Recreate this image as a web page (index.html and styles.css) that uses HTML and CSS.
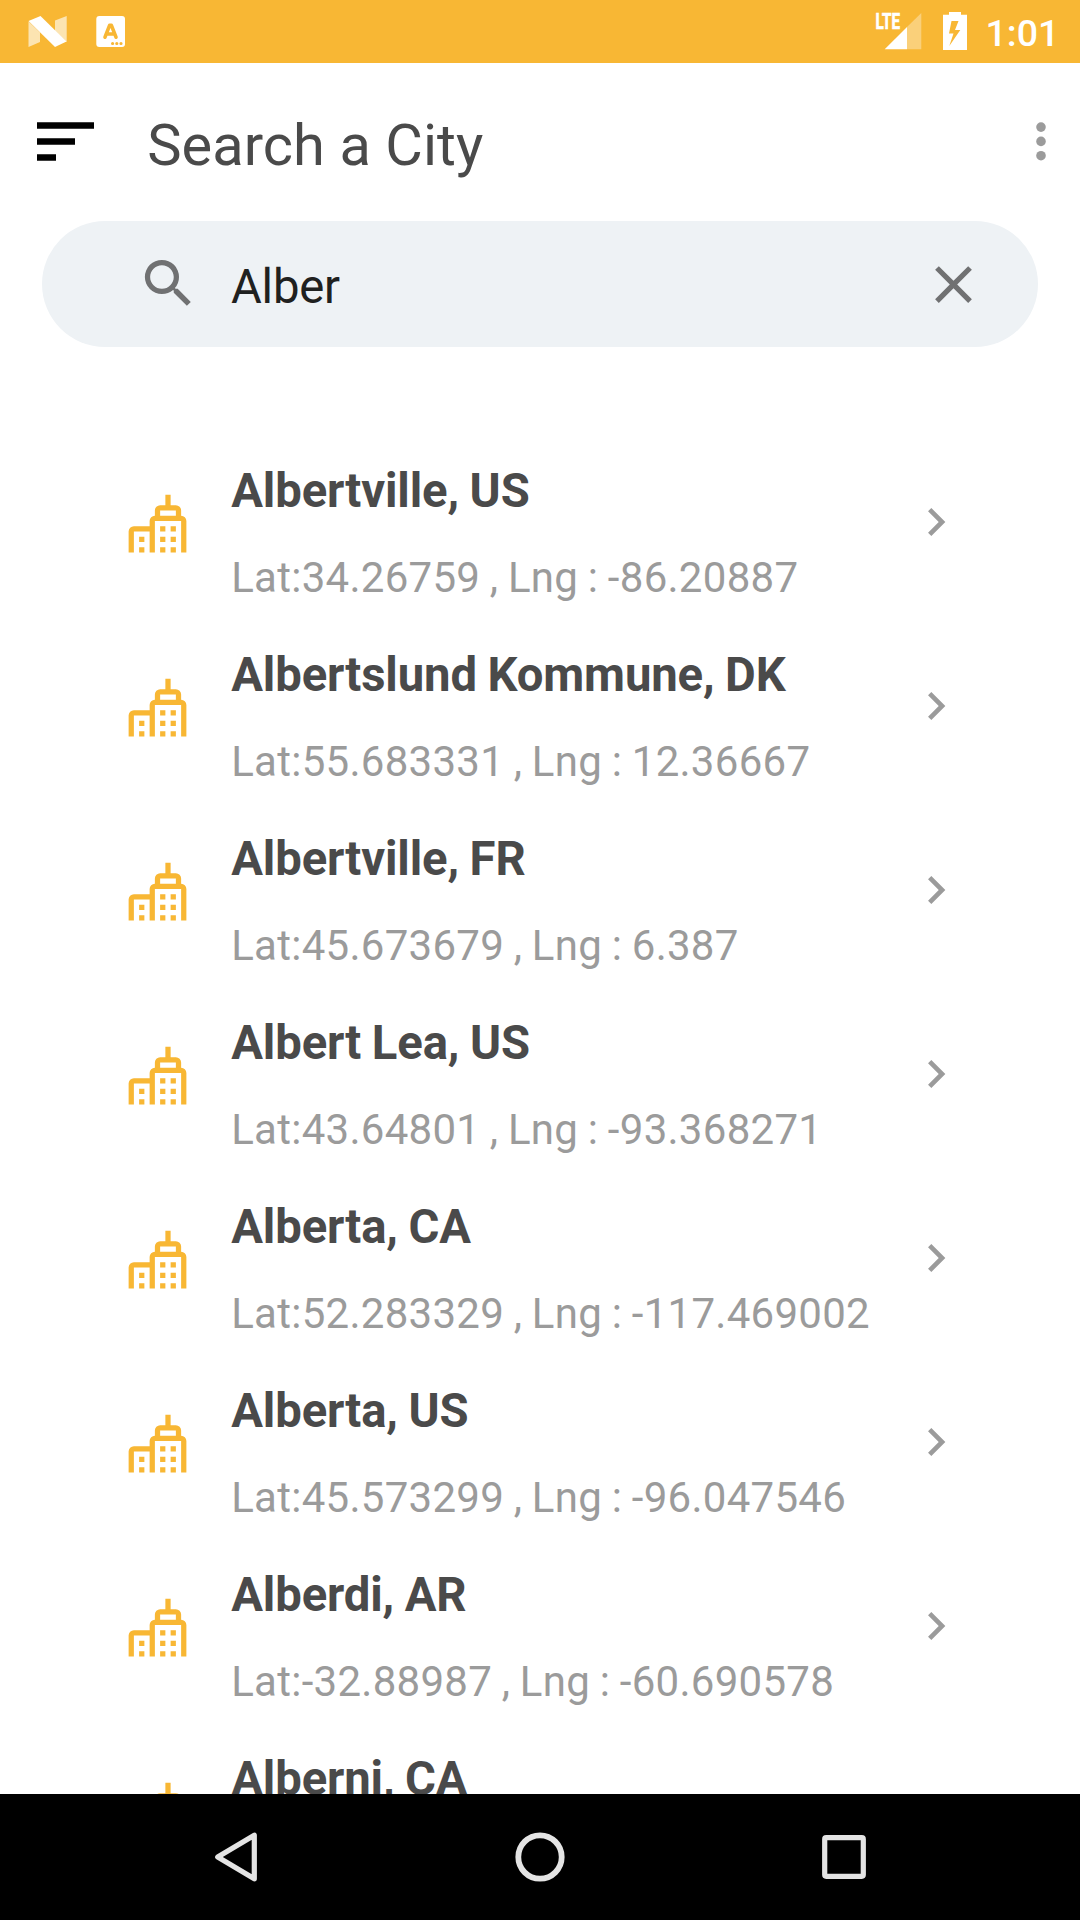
FILE: index.html
```html
<!DOCTYPE html>
<html lang="en">
<head>
<meta charset="utf-8">
<title>Search a City</title>
<link rel="stylesheet" href="styles.css">
</head>
<body>
<svg class="sprite" aria-hidden="true">
  <symbol id="city" viewBox="0 0 24 24">
    <path fill-rule="evenodd" d="M15 1v4h-2a2 2 0 0 0-2 2v2a2 2 0 0 0-2 2v2H3a2 2 0 0 0-2 2v8h2v-8h6v8h2V11h10v12h2V11a2 2 0 0 0-2-2V7a2 2 0 0 0-2-2h-2V1zM13 7h6v2h-6z"/>
    <path d="M5 17h2v2H5zM5 21h2v2H5zM13 13h2v2h-2zM17 13h2v2h-2zM13 17h2v2h-2zM17 17h2v2h-2zM13 21h2v2h-2zM17 21h2v2h-2z"/>
  </symbol>
  <symbol id="chevron" viewBox="0 0 24 24">
    <path d="M10 6L8.59 7.41 13.17 12l-4.58 4.59L10 18l6-6z"/>
  </symbol>
</svg>
<div class="screen">
  <header class="status">
    <svg class="notifications" viewBox="0 0 140 63">
      <path fill="#fff" fill-opacity=".62" d="M28.500 21.500L40 32.500V42L28.500 47zM55 20.500L66.700 16V42L55 31z"/>
      <path fill="#fff" d="M28.500 21L40.500 16 66.500 41.500 55 47z"/>
      <rect x="96.300" y="16" width="28.700" height="31" rx="3" fill="#fff"/>
      <path d="M105 37.200L109.600 25.300H111.400L116 37.200M106.800 34H114" fill="none" stroke="#f8b734" stroke-width="3.600" stroke-linecap="round" stroke-linejoin="round"/>
      <path d="M112.600 43.500h0M116.800 43.500h0M121 43.500h0" stroke="#f8b734" stroke-width="3.200" stroke-linecap="round"/>
    </svg>
    <div class="system">
      <svg class="signals" viewBox="870 0 110 63">
        <path fill="#fff" fill-opacity=".35" d="M907 27L921.300 13V49.300H907z"/>
        <path fill="#fff" d="M884.700 49.300L907 27V49.300z"/>
        <text class="lte" x="875.500" y="29.200" textLength="24.500" lengthAdjust="spacingAndGlyphs">LTE</text>
        <path fill="#fff" fill-rule="evenodd" d="M949 14.700V12H961V14.700H967V50H943V14.700zM951.500 21L949 33.500H953.500L949.300 46 960.300 30H955L958.500 21z"/>
      </svg>
      <span class="clock">1:01</span>
    </div>
  </header>

  <div class="toolbar">
    <svg class="menu" viewBox="0 0 57 40">
      <path d="M0 .3h57v6.400H0zM0 16.300h38v6.400H0zM0 32.300h19v6.400H0z"/>
    </svg>
    <h1 class="title">Search a City</h1>
    <svg class="more" viewBox="0 0 10 40">
      <circle cx="5" cy="5.100" r="4.800"/><circle cx="5" cy="19.400" r="4.800"/><circle cx="5" cy="33.700" r="4.800"/>
    </svg>
  </div>

  <div class="search">
    <svg class="icon glass" viewBox="0 0 24 24"><path d="M15.500 14h-.79l-.28-.27A6.471 6.471 0 0 0 16 9.500 6.500 6.500 0 1 0 9.500 16c1.610 0 3.090-.59 4.230-1.570l.27.28v.79l5 4.990L20.490 19l-4.990-5zm-6 0C7.010 14 5 11.990 5 9.500S7.010 5 9.500 5 14 7.010 14 9.500 11.990 14 9.500 14z"/></svg>
    <span class="query">Alber</span>
    <svg class="icon" viewBox="0 0 24 24"><path d="M19 6.410L17.590 5 12 10.590 6.410 5 5 6.410 10.590 12 5 17.590 6.410 19 12 13.410 17.590 19 19 17.590 13.410 12z"/></svg>
  </div>

  <ul class="list">
    <li class="row"><svg class="city"><use href="#city"/></svg><div class="text"><div class="name">Albertville, US</div><div class="coords">Lat:34.26759 , Lng : -86.20887</div></div><svg class="chevron"><use href="#chevron"/></svg></li>
    <li class="row"><svg class="city"><use href="#city"/></svg><div class="text"><div class="name">Albertslund Kommune, DK</div><div class="coords">Lat:55.683331 , Lng : 12.36667</div></div><svg class="chevron"><use href="#chevron"/></svg></li>
    <li class="row"><svg class="city"><use href="#city"/></svg><div class="text"><div class="name">Albertville, FR</div><div class="coords">Lat:45.673679 , Lng : 6.387</div></div><svg class="chevron"><use href="#chevron"/></svg></li>
    <li class="row"><svg class="city"><use href="#city"/></svg><div class="text"><div class="name">Albert Lea, US</div><div class="coords">Lat:43.64801 , Lng : -93.368271</div></div><svg class="chevron"><use href="#chevron"/></svg></li>
    <li class="row"><svg class="city"><use href="#city"/></svg><div class="text"><div class="name">Alberta, CA</div><div class="coords">Lat:52.283329 , Lng : -117.469002</div></div><svg class="chevron"><use href="#chevron"/></svg></li>
    <li class="row"><svg class="city"><use href="#city"/></svg><div class="text"><div class="name">Alberta, US</div><div class="coords">Lat:45.573299 , Lng : -96.047546</div></div><svg class="chevron"><use href="#chevron"/></svg></li>
    <li class="row"><svg class="city"><use href="#city"/></svg><div class="text"><div class="name">Alberdi, AR</div><div class="coords">Lat:-32.88987 , Lng : -60.690578</div></div><svg class="chevron"><use href="#chevron"/></svg></li>
    <li class="row"><svg class="city"><use href="#city"/></svg><div class="text"><div class="name">Alberni, CA</div></div></li>
  </ul>

  <nav class="navbar">
    <svg class="key" viewBox="0 0 64 64"><path d="M50.300 10.200V53.800L13.700 32z"/></svg>
    <svg class="key home" viewBox="0 0 64 64"><circle cx="32" cy="32" r="21.700"/></svg>
    <svg class="key" viewBox="0 0 64 64"><rect x="12.700" y="12.700" width="38.600" height="38.600" rx="1.500"/></svg>
  </nav>
</div>
</body>
</html>
```
FILE: styles.css
```css
* { box-sizing: border-box; margin: 0; padding: 0; }

body {
  font-family: Roboto, sans-serif;
  background: #fff;
}

svg { display: block; flex: none; }

.sprite { display: none; }

.screen {
  width: 1080px;
  height: 1920px;
  display: flex;
  flex-direction: column;
  overflow: hidden;
}

/* Status bar */
.status {
  flex: none;
  height: 63px;
  background: #f8b734;
  display: flex;
  justify-content: space-between;
  padding-right: 24px;
}
.notifications { width: 140px; height: 63px; }
.system { display: flex; }
.signals { width: 110px; height: 63px; }
.lte { font-size: 22.500px; font-weight: 700; fill: #fff; stroke: #fff; stroke-width: .7; }
.clock {
  width: 76px;
  padding-left: 5.500px;
  font-size: 37.500px;
  font-weight: 500;
  line-height: 66px;
  color: #fff;
}

/* Toolbar */
.toolbar {
  flex: none;
  height: 158px;
  display: flex;
  align-items: flex-start;
  padding: 59px 34.500px 0 37px;
}
.menu { width: 57px; height: 40px; }
.title {
  flex: 1;
  margin: -11px 0 0 53.200px;
  font-size: 57.750px;
  font-weight: 400;
  line-height: 68px;
  letter-spacing: .07px;
  color: #4a4a4a;
}
.more { width: 10px; height: 40px; fill: #9b9b9b; }

/* Search field */
.search {
  flex: none;
  height: 126px;
  margin: 0 42px;
  padding: 0 53px 0 95px;
  border-radius: 63px;
  background: #eef2f5;
  display: flex;
  align-items: center;
}
.search .icon { width: 63px; height: 63px; fill: #707172; }
.search .glass { margin-bottom: 1.500px; }
.query {
  flex: 1;
  margin: 6px 0 0 31px;
  font-size: 47.250px;
  line-height: 56px;
  letter-spacing: -.2px;
  color: #1f2120;
}

/* Results */
.list {
  flex: 1;
  min-height: 0;
  overflow: hidden;
  padding-top: 84px;
  list-style: none;
}
.row {
  height: 184px;
  display: flex;
  align-items: flex-start;
  padding: 32px 116.500px 0 125.700px;
}
.city { width: 63px; height: 63px; margin-top: 29px; fill: #f8b734; }
.text { flex: 1; margin-left: 42.500px; white-space: nowrap; }
.name {
  font-size: 47.250px;
  font-weight: 700;
  line-height: 56px;
  letter-spacing: -.13px;
  word-spacing: -1px;
  color: #4a4a4a;
}
.coords {
  margin-top: 34px;
  font-size: 42px;
  line-height: 50px;
  letter-spacing: .28px;
  word-spacing: -1.100px;
  color: #9b9b9b;
}
.chevron { width: 56px; height: 56px; margin-top: 31px; fill: #9b9b9b; }

/* Navigation keys */
.navbar {
  flex: none;
  height: 126px;
  background: #000;
  display: grid;
  grid-template-columns: repeat(3, 304px);
  justify-content: center;
  place-items: center;
}
.key {
  width: 64px;
  height: 64px;
  fill: none;
  stroke: #e4e4e4;
  stroke-width: 5.200;
  stroke-linejoin: round;
}
.home { stroke-width: 5.800; }
```
